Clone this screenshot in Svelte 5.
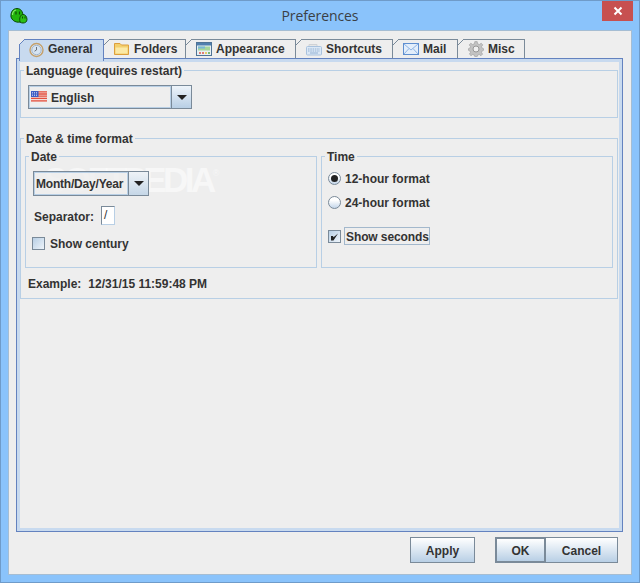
<script>
  const tabs = [
    { name: "General", icon: "clock", width: 85 },
    { name: "Folders", icon: "folder", width: 82 },
    { name: "Appearance", icon: "appearance", width: 110 },
    { name: "Shortcuts", icon: "keyboard", width: 97 },
    { name: "Mail", icon: "mail", width: 65 },
    { name: "Misc", icon: "gear", width: 67 }
  ];
  let active = $state("General");
  let hour = $state("12");
  let century = $state(false);
  let seconds = $state(true);
</script>

<div class="window">
  <header class="titlebar">
    <svg class="appicon" width="18" height="18" viewBox="0 0 18 18">
      <path d="M1 11 C.5 6 3 2.500 7 2.500 C11 2.500 13 6 13 10 L13 15 C10 17 3 17 1 11 Z" fill="#21b40e" stroke="#0d4a08" stroke-width="1"/>
      <path d="M2.500 9 C2.500 6.500 4 4.500 6 4" fill="none" stroke="#8bea6c" stroke-width="1.200"/>
      <path d="M6 5.500 V8.500 M9.500 5.500 V8.500" stroke="#0d4a08" stroke-width="1.200"/>
      <path d="M10 16 C9 12 10.500 8.500 13 8.500 C15.500 8.500 17 11 17 13.500 C17 16 15 17 13 17 C12 17 11 16.800 10 16 Z" fill="#2cc016" stroke="#0d4a08" stroke-width="1"/>
      <path d="M12.500 10.500 V12.500 M15 10.500 V12.500" stroke="#0d4a08" stroke-width="1"/>
    </svg>
    <span class="title">Preferences</span>
    <button class="close" aria-label="Close">
      <svg width="10" height="10" viewBox="0 0 10 10"><path d="M1.500 1.500 L8.500 8.500 M8.500 1.500 L1.500 8.500" stroke="#fff" stroke-width="2"/></svg>
    </button>
  </header>

  <div class="client">
    <div class="tabs">
      {#each tabs as tab}
        <button class="tab" class:selected={active == tab.name} style:width="{tab.width}px" onclick={() => (active = tab.name)}>
          <svg width="16" height="16" viewBox="0 0 16 16">
            {#if tab.icon == "clock"}
              <circle cx="7.500" cy="8" r="6.500" fill="#dfe6ee" stroke="#c3a06c" stroke-width="1.400"/>
              <circle cx="7.500" cy="8" r="4.700" fill="#d6e4f2" stroke="#8fa8c4" stroke-width=".8"/>
              <path d="M7.500 5 V8 L5.500 9.200" fill="none" stroke="#6a7078" stroke-width="1"/>
            {:else if tab.icon == "folder"}
              <path d="M.5 2.500 H6 L7.500 4 H14.500 V13.500 H.5 Z" fill="#f3cf6d" stroke="#dd9f3c"/>
              <path d="M1.500 6.500 H13.500 V12.500 H1.500 Z" fill="#fbe9a6"/>
            {:else if tab.icon == "appearance"}
              <rect x=".5" y="1.500" width="15" height="13" fill="#e8f0f4" stroke="#4f7396"/>
              <rect x="1" y="2" width="14" height="2.500" fill="#4f7fae"/>
              <rect x="2" y="5.500" width="12" height="4" fill="#a6d69a"/>
              <rect x="2" y="5.500" width="7" height="2" fill="#79b6d8"/>
              <path d="M3 12 H5 M6 12 H8" stroke="#e0574a" stroke-width="1.500"/>
              <path d="M9 12 H11" stroke="#e6c23c" stroke-width="1.500"/>
              <path d="M12 12 H14" stroke="#59a84c" stroke-width="1.500"/>
            {:else if tab.icon == "keyboard"}
              <path d="M3 5 V3.500 H11 V5" fill="#e6e6e6" stroke="#cfd2d6"/>
              <rect x=".5" y="5.500" width="15" height="8.500" rx="1" fill="#dbe8f6" stroke="#a9c2de"/>
              <path d="M2 8 H14 M2 10 H14" stroke="#92b0d2" stroke-dasharray="1.500 .8"/>
              <path d="M4 12 H12" stroke="#92b0d2"/>
            {:else if tab.icon == "mail"}
              <rect x=".5" y="2.500" width="15" height="11" fill="#e3eefb" stroke="#5f8fd0"/>
              <path d="M1 3 L8 9 L15 3 M1 13 L6 7.500 M15 13 L10 7.500" fill="none" stroke="#8fb4e4"/>
            {:else}
              <path d="M6.800 .6 H9.200 L9.600 2.800 L11.400 3.500 L13.200 2.200 L14.800 3.900 L13.500 5.600 L14.200 7.200 L15.600 7.700 V9.300 L14.200 9.800 L13.500 11.400 L14.600 13.100 L13 14.700 L11.300 13.500 L9.600 14.200 L9.200 15.600 H6.800 L6.400 14.200 L4.700 13.500 L3 14.700 L1.400 13.100 L2.500 11.400 L1.800 9.800 L.4 9.300 V7.700 L1.800 7.200 L2.500 5.600 L1.200 3.900 L2.800 2.200 L4.600 3.500 L6.400 2.800 Z" fill="#c2c2c2" stroke="#9a9a9a" stroke-width=".6"/>
              <circle cx="8" cy="8" r="3" fill="#efefef" stroke="#969696"/>
            {/if}
          </svg>
          <span>{tab.name}</span>
        </button>
      {/each}
    </div>

    <main class="panel">
      <fieldset class="language">
        <legend>Language (requires restart)</legend>
        <div class="combo lang-combo">
          <div class="combo-value">
            <svg class="flag" width="16" height="11" viewBox="0 0 16 11">
              <rect width="16" height="11" fill="#f5dcd8"/>
              <path d="M0 .8 H16 M0 3 H16 M0 5.200 H16 M0 7.400 H16 M0 9.800 H16" stroke="#e2503f" stroke-width="1.300"/>
              <rect width="7.500" height="6" fill="#3f5fc4"/>
              <path d="M1 1.500 H7 M1 3 H7 M1 4.500 H7" stroke="#dfe6ff" stroke-width=".7" stroke-dasharray="1 1"/>
            </svg>
            <span>English</span>
          </div>
          <div class="combo-arrow"><i></i></div>
        </div>
      </fieldset>

      <fieldset class="datetime">
        <legend>Date &amp; time format</legend>
        <div class="columns">
          <fieldset class="date">
            <legend>Date</legend>
            <div class="combo date-combo">
              <div class="combo-value">Month/Day/Year</div>
              <div class="combo-arrow"><i></i></div>
            </div>
            <div class="separator">
              <span class="label">Separator:</span>
              <span class="sep-input">/</span>
            </div>
            <button class="check-row century" onclick={() => (century = !century)}>
              <span class="box"></span>
              <span class="label">Show century</span>
            </button>
          </fieldset>

          <fieldset class="time">
            <legend>Time</legend>
            <button class="radio-row first" onclick={() => (hour = "12")}>
              <span class="radio" class:on={hour == "12"}></span>
              <span class="label">12-hour format</span>
            </button>
            <button class="radio-row second" onclick={() => (hour = "24")}>
              <span class="radio" class:on={hour == "24"}></span>
              <span class="label">24-hour format</span>
            </button>
            <button class="check-row seconds" onclick={() => (seconds = !seconds)}>
              <span class="box checked">
                {#if seconds}
                  <svg width="11" height="11" viewBox="0 0 11 11"><path d="M2 5 L2 9.500 L4.500 9.500 L9 2.500 L4.500 6.200 L4 5 Z" fill="#222"/></svg>
                {/if}
              </span>
              <span class="focus">Show seconds</span>
            </button>
          </fieldset>
        </div>
        <p class="example"><span>Example:</span><span>12/31/15 11:59:48 PM</span></p>
      </fieldset>
    </main>

    <footer class="actions">
      <button class="btn apply">Apply</button>
      <button class="btn ok">OK</button>
      <button class="btn cancel">Cancel</button>
    </footer>
  </div>

  <div class="watermark">SOFTPEDIA<sup>®</sup></div>
</div>

<style>
  :global(body) {
    margin: 0;
    background: #8ac3fb;
  }

  .window {
    position: relative;
    width: 640px;
    height: 583px;
    box-sizing: border-box;
    background: #8ac3fb;
    border: 1px solid #6f9bc9;
    display: flex;
    flex-direction: column;
    font-family: "Liberation Sans", Arial, sans-serif;
    font-size: 12px;
    font-weight: 700;
    color: #333;
    overflow: hidden;
  }

  .titlebar {
    height: 29px;
    flex: none;
    display: flex;
    align-items: center;
    justify-content: center;
    position: relative;
  }

  .title {
    font-family: "Open Sans", "Noto Sans", sans-serif;
    font-size: 14px;
    font-weight: 400;
    letter-spacing: -0.1px;
    color: #3a3f45;
    margin-bottom: 1px;
  }

  .appicon {
    position: absolute;
    left: 9px;
    top: 5px;
  }

  button {
    font: inherit;
    color: inherit;
    background: none;
    border: 0;
    padding: 0;
    margin: 0;
  }

  .close {
    position: absolute;
    right: 6px;
    top: 0;
    width: 31px;
    height: 20px;
    background: #c75050;
    display: flex;
    align-items: center;
    justify-content: center;
  }

  .client {
    flex: 1;
    margin: 0 7px 7px;
    background: #eee;
    border: 1px solid #a5bdd3;
    display: flex;
    flex-direction: column;
    min-height: 0;
  }

  .tabs {
    display: flex;
    margin: 8px 0 0 10px;
    height: 19px;
    position: relative;
    z-index: 1;
  }

  .tab {
    position: relative;
    display: flex;
    flex: none;
    align-items: center;
    gap: 4px;
    height: 20px;
    box-sizing: border-box;
    padding: 0 0 0 10px;
    border-top: 1px solid #7a8a99;
    border-right: 1px solid #7a8a99;
    background: #eee;
    line-height: 14px;
    white-space: nowrap;
  }

  .tab::before {
    content: "";
    position: absolute;
    left: 0;
    top: -1px;
    width: 6px;
    height: 6px;
    background: linear-gradient(to bottom right, #eee 46%, #7a8a99 46%, #7a8a99 58%, transparent 58%);
  }

  .tab.selected {
    background: #c8daef;
    border-color: #6382bf;
    border-left: 1px solid #6382bf;
    height: 22px;
    padding-left: 9px;
    gap: 3px;
    z-index: 2;
    margin-bottom: -3px;
    align-items: flex-start;
    padding-top: 2px;
  }

  .tab.selected::before {
    left: -1px;
    background: linear-gradient(to bottom right, #eee 46%, #6382bf 46%, #6382bf 58%, transparent 58%);
  }

  .tab:not(.selected) {
    border-bottom: 1px solid #6382bf;
  }

  .panel {
    flex: 1;
    margin: 0 8px 0 7px;
    border: 1px solid #6382bf;
    outline: 3px solid #c8daef;
    outline-offset: -4px;
    padding: 4px 4px 0 3px;
    display: flex;
    flex-direction: column;
    gap: 13px;
  }

  fieldset {
    margin: 0;
    padding: 0;
    border: 1px solid #b8cfe5;
    min-width: 0;
  }

  legend {
    padding: 0 2px;
    margin-left: 3px;
    line-height: 16px;
    height: 14px;
    white-space: nowrap;
  }

  .combo {
    display: flex;
    box-sizing: border-box;
    border: 1px solid #7a8a99;
    background: #eee;
  }

  .combo-value {
    flex: 1;
    display: flex;
    align-items: center;
    gap: 4px;
    padding-left: 1px;
    border: 1px solid #b8cfe5;
    min-width: 0;
    white-space: nowrap;
  }

  .combo-arrow {
    flex: none;
    width: 19px;
    border-left: 1px solid #7a8a99;
    background: linear-gradient(#eef4fa, #b8cfe5);
    display: flex;
    align-items: center;
    justify-content: center;
  }

  .combo-arrow i {
    display: block;
    width: 0;
    height: 0;
    border-left: 5px solid transparent;
    border-right: 5px solid transparent;
    border-top: 5px solid #222;
  }

  .lang-combo {
    width: 164px;
    height: 24px;
    margin: 8px 0 8px 7px;
  }

  .lang-combo span {
    padding-top: 1px;
  }

  .flag {
    margin-top: -2px;
  }

  .columns {
    display: grid;
    grid-template-columns: 292px 292px;
    gap: 4px;
    margin: 4px 0 0 4px;
  }

  .date,
  .time {
    display: flex;
    flex-direction: column;
    align-items: flex-start;
  }

  .date {
    padding-bottom: 17px;
  }

  /* sits above the watermark, which only shows through faintly */
  .date-combo {
    position: relative;
    z-index: 2;
    width: 116px;
    height: 25px;
    margin: 8px 0 0 7px;
    background: rgba(238, 238, 238, 0.8);
  }

  .date-combo .combo-arrow {
    background: linear-gradient(rgba(238, 244, 250, 0.75), rgba(184, 207, 229, 0.75));
  }

  .date-combo .combo-value {
    padding-left: 1px;
    gap: 0;
    letter-spacing: -0.2px;
  }

  .separator {
    display: flex;
    align-items: center;
    margin: 10px 0 0 8px;
    height: 19px;
    gap: 7px;
  }

  .sep-input {
    width: 14px;
    height: 19px;
    box-sizing: border-box;
    background: #fff;
    border: 1px solid #7a8a99;
    border-bottom-color: #b8cfe5;
    border-right-color: #b8cfe5;
    padding-left: 2px;
    line-height: 17px;
    font-weight: 400;
  }

  .check-row,
  .radio-row {
    display: flex;
    align-items: center;
    line-height: 13px;
  }

  .label {
    margin-top: 2px;
  }

  .box {
    width: 13px;
    height: 13px;
    box-sizing: border-box;
    border: 1px solid #7a8a99;
    background: linear-gradient(135deg, #b8cfe5, #eef4fa);
    display: flex;
    align-items: center;
    justify-content: center;
  }

  .century {
    margin: 12px 0 0 6px;
    gap: 5px;
    height: 13px;
  }

  .radio-row {
    gap: 4px;
    margin-left: 6px;
    height: 13px;
  }

  .first {
    margin-top: 9px;
  }

  .second {
    margin-top: 11px;
  }

  .radio {
    width: 13px;
    height: 13px;
    box-sizing: border-box;
    border-radius: 50%;
    border: 1px solid #7a8a99;
    background: linear-gradient(#fff 30%, #c4d6ea);
    display: flex;
    align-items: center;
    justify-content: center;
  }

  .radio.on::after {
    content: "";
    width: 7px;
    height: 7px;
    border-radius: 50%;
    background: #222;
  }

  .seconds {
    margin: 18px 0 0 6px;
    gap: 3px;
  }

  .focus {
    border: 1px solid #a3b8cc;
    padding: 2px 0 0 1px;
    line-height: 14px;
    letter-spacing: -0.1px;
  }

  .example {
    margin: 8px 0 8px 7px;
    display: flex;
    gap: 7px;
    line-height: 16px;
    height: 14px;
  }

  .actions {
    flex: none;
    height: 42px;
    box-sizing: border-box;
    padding: 5px 13px 0 0;
    display: flex;
    justify-content: flex-end;
    align-items: flex-start;
  }

  .btn {
    height: 26px;
    box-sizing: border-box;
    border: 1px solid #7a8a99;
    background: linear-gradient(#fff, #b8cfe5);
    text-align: center;
    padding-top: 1px;
  }

  .apply {
    width: 65px;
    margin-right: 20px;
  }

  .ok {
    width: 51px;
    border: 2px solid #7a8a99;
  }

  .cancel {
    width: 72px;
    border-left: 0;
  }

  .watermark {
    position: absolute;
    z-index: 1;
    left: 43px;
    top: 161px;
    font-size: 35px;
    font-weight: 700;
    color: rgba(255, 255, 255, 0.55);
    letter-spacing: -3.5px;
    line-height: 36px;
    pointer-events: none;
  }

  .watermark sup {
    font-size: 9px;
    vertical-align: 16px;
    line-height: 0;
    font-weight: 400;
    letter-spacing: 0;
  }
</style>
